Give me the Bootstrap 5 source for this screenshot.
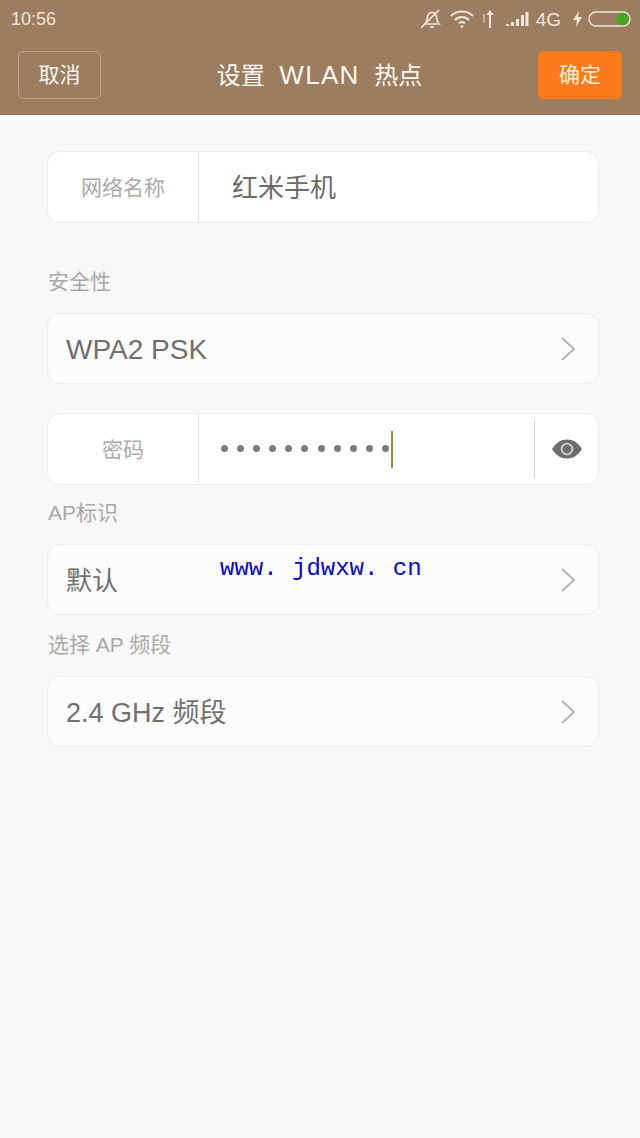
<!DOCTYPE html>
<html lang="zh">
<head>
<meta charset="utf-8">
<title>设置 WLAN 热点</title>
<link href="https://cdn.jsdelivr.net/npm/bootstrap@5.3.0/dist/css/bootstrap.min.css" rel="stylesheet">
<style>
html,body{height:100%;}
body{background:#f8f8f8;font-family:"Liberation Sans","Noto Sans CJK SC",sans-serif;color:#6b6b6b;position:relative;overflow:hidden;}
.top-head{height:115px;background:#9c7d5f;border-bottom:1px solid #8d7258;color:#fbf8f3;}
.stat-bar{height:38px;padding:0 9px 0 11px;}
.stat-time{font-size:18px;line-height:1;color:#efe6da;}
.stat-icons{gap:7px;color:#f0e8dc;}
.stat-4g{font-size:19px;line-height:1;margin-right:4px;}
.stat-batt{gap:5px;}
.ic-arrow{margin:0 3px 0 -1px;}
.ic-bell{margin-right:-1px;}
.title-bar{height:76px;padding:0 18px 0 18px;}
.btn-cancel{width:83px;height:48px;border:1px solid #b5a088;border-radius:5px;background:transparent;color:#fbf8f3;font-size:21px;padding:0;margin-top:-2px;}
.btn-ok{width:84px;height:48px;border:0;border-radius:5px;background:#fb7b1c;color:#fdf0dc;font-size:21px;padding:0;margin-top:-2px;}
.head-title{font-size:24px;line-height:1;margin-top:-3px;word-spacing:8px;}
.head-latin{font-size:26px;letter-spacing:1.300px;}
.form-area{padding:36px 41px 0 47px;}
.field-box{height:72px;background:#fff;border:1px solid #ececec;border-radius:13px;overflow:hidden;}
.field-label{width:151px;border-right:1px solid #e6e6e6;font-size:21px;color:#a9a9a9;flex:none;padding-top:2px;}
.field-value{font-size:26px;color:#6e6a66;padding-left:33px;padding-top:2px;}
.select-box{height:71px;background:#fcfcfc;border:1px solid #ececec;border-radius:13px;padding:0 22px 0 18px;color:#6f6f6f;}
.select-text{font-size:28px;padding-top:3px;}
.select-cjk{font-size:26px;padding-top:3px;}
.select-mixed{font-size:27px;padding-top:3px;}
.sec-label{font-size:21px;line-height:1;color:#a8a8a8;padding-left:1px;}
.pw-dots{padding-left:22px;gap:9.100px;}
.pw-dot{width:7px;height:7px;border-radius:50%;background:#7b7b7b;margin-top:-1px;}
.pw-caret{width:2px;height:37px;background:#b5813f;margin-left:-7px;}
.pw-sep{width:1px;height:58px;background:#cfcfcf;}
.eye-cell{width:63px;flex:none;}
.water-mark{position:absolute;left:220px;top:554px;font-family:"Liberation Mono",monospace;font-size:24px;line-height:30px;color:#0606cc;white-space:pre;}
.mt-label-a{margin-top:48px;}
.mt-sel{margin-top:21px;}
.mt-pw{margin-top:29px;}
.mt-label-b{margin-top:17px;}
.mt-sel2{margin-top:21px;}
.mt-label-c{margin-top:19px;}
</style>
</head>
<body>
<header class="top-head">
  <div class="stat-bar d-flex align-items-center justify-content-between">
    <span class="stat-time">10:56</span>
    <div class="stat-icons d-flex align-items-center">
      <svg class="ic-bell" width="24" height="22" viewBox="0 0 24 22" fill="none" stroke="#f0e8dc" stroke-width="1.600"><path d="M6 16c2-2 2-4 2.500-7 .5-3 2.500-4.500 4.500-4.500s4 1.500 4.500 4.500c.5 3 .5 5 2.500 7z"/><path d="M11 19h4"/><path d="M2 20 20 2"/></svg>
      <svg width="26" height="20" viewBox="0 0 26 20" fill="none" stroke="#f0e8dc" stroke-width="2"><path d="M2 7c6-6 16-6 22 0"/><path d="M6 11c4-4 10-4 14 0"/><path d="M10 14.500c2-2 4-2 6 0"/><circle cx="13" cy="17.500" r="1.300" fill="#f0e8dc" stroke="none"/></svg>
      <svg class="ic-arrow" width="14" height="20" viewBox="0 0 14 20" fill="#f0e8dc"><path d="M8 19V6H5.500L9 1l3.500 5H10v13z"/><path d="M2 5h2v9H2z" opacity=".45"/></svg>
      <svg width="24" height="18" viewBox="0 0 24 18" fill="#f0e8dc"><path d="M1 14h3v2H1zM6 12h3v4H6zM11 9h3v7h-3zM16 5h3v11h-3zM20.500 2h3v14h-3z"/></svg>
      <span class="stat-4g">4G</span>
      <div class="d-flex align-items-center stat-batt">
        <svg width="11" height="18" viewBox="0 0 11 18" fill="#f0e8dc"><path d="M7 1 1 10h4l-1 7 6-10H6z"/></svg>
        <svg width="43" height="16" viewBox="0 0 43 16" fill="none"><rect x="1" y="1" width="41" height="14" rx="7" stroke="#f0e8dc" stroke-width="1.300"/><circle cx="34.500" cy="8" r="6.300" fill="#46a81e"/></svg>
      </div>
    </div>
  </div>
  <div class="title-bar d-flex align-items-center justify-content-between">
    <button type="button" class="btn btn-cancel">取消</button>
    <span class="head-title">设置 <span class="head-latin">WLAN</span> 热点</span>
    <button type="button" class="btn btn-ok">确定</button>
  </div>
</header>

<main class="form-area d-flex flex-column">
  <div class="field-box d-flex align-items-stretch">
    <div class="field-label d-flex align-items-center justify-content-center">网络名称</div>
    <div class="field-value d-flex align-items-center">红米手机</div>
  </div>

  <div class="sec-label mt-label-a">安全性</div>

  <div class="select-box d-flex align-items-center justify-content-between mt-sel">
    <span class="select-text">WPA2 PSK</span>
    <svg width="16" height="26" viewBox="0 0 16 26" fill="none" stroke="#b0b0b0" stroke-width="1.800"><path d="m2 2 12 11L2 24"/></svg>
  </div>

  <div class="field-box d-flex align-items-stretch mt-pw">
    <div class="field-label d-flex align-items-center justify-content-center">密码</div>
    <div class="flex-grow-1 d-flex align-items-center pw-dots">
      <i class="pw-dot"></i><i class="pw-dot"></i><i class="pw-dot"></i><i class="pw-dot"></i><i class="pw-dot"></i><i class="pw-dot"></i><i class="pw-dot"></i><i class="pw-dot"></i><i class="pw-dot"></i><i class="pw-dot"></i><i class="pw-dot"></i><i class="pw-caret"></i>
    </div>
    <div class="d-flex align-items-center"><div class="pw-sep"></div></div>
    <div class="eye-cell d-flex align-items-center justify-content-center">
      <svg width="30" height="20" viewBox="0 0 30 20"><path fill="#6c6c6c" d="M0 10C4 3.500 9 .5 15 .5S26 3.500 30 10c-4 6.500-9 9.500-15 9.500S4 16.500 0 10z"/><circle cx="15" cy="10" r="6.300" fill="#c9c9c9"/><circle cx="15" cy="10" r="4.400" fill="#6c6c6c"/></svg>
    </div>
  </div>

  <div class="sec-label mt-label-b">AP标识</div>
  <div class="select-box d-flex align-items-center justify-content-between mt-sel2">
    <span class="select-cjk">默认</span>
    <svg width="16" height="26" viewBox="0 0 16 26" fill="none" stroke="#b0b0b0" stroke-width="1.800"><path d="m2 2 12 11L2 24"/></svg>
  </div>

  <div class="sec-label mt-label-c">选择 AP 频段</div>
  <div class="select-box d-flex align-items-center justify-content-between mt-sel2">
    <span class="select-mixed">2.4 GHz 频段</span>
    <svg width="16" height="26" viewBox="0 0 16 26" fill="none" stroke="#b0b0b0" stroke-width="1.800"><path d="m2 2 12 11L2 24"/></svg>
  </div>
</main>
<div class="water-mark">www. jdwxw. cn</div>
<script src="https://cdn.jsdelivr.net/npm/bootstrap@5.3.0/dist/js/bootstrap.bundle.min.js"></script>
</body>
</html>
